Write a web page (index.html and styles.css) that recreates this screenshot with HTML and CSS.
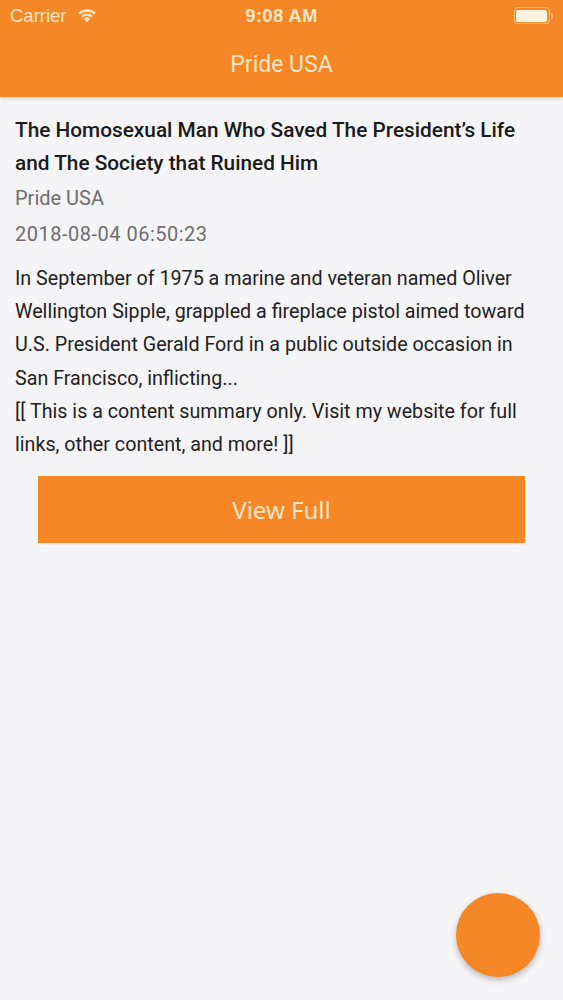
FILE: index.html
```html
<!DOCTYPE html>
<html>
<head>
<meta charset="utf-8">
<link rel="stylesheet" href="styles.css">
</head>
<body>
<div class="app">
  <header class="header">
    <div class="status">
      <div class="status-left">
        <span>Carrier</span>
        <svg class="wifi" width="22" height="16" viewBox="0 0 20 14">
          <path d="M10 13.5 L7 10.3 A4.4 4.4 0 0 1 13 10.3 Z" fill="#FFE6C4"/>
          <path d="M4.6 7.7 A7.8 7.8 0 0 1 15.4 7.7 L13.9 9.3 A5.6 5.6 0 0 0 6.1 9.3 Z" fill="#FFE6C4"/>
          <path d="M2 5 A11.5 11.5 0 0 1 18 5 L16.5 6.6 A9.3 9.3 0 0 0 3.5 6.6 Z" fill="#FFE6C4"/>
        </svg>
      </div>
      <div class="status-time">9:08 AM</div>
      <div class="status-right">
        <div class="battery"><div class="battery-fill"></div></div>
        <div class="battery-tip"></div>
      </div>
    </div>
    <div class="nav">Pride USA</div>
  </header>
  <main class="content">
    <h1 class="title">The Homosexual Man Who Saved The President’s Life and The Society that Ruined Him</h1>
    <div class="meta">Pride USA</div>
    <div class="meta date">2018-08-04 06:50:23</div>
    <p class="body">In September of 1975 a marine and veteran named Oliver Wellington Sipple, grappled a fireplace pistol aimed toward U.S. President Gerald Ford in a public outside occasion in San Francisco, inflicting...<br>[[ This is a content summary only. Visit my website for full links, other content, and more! ]]</p>
    <div class="btn-wrap"><button class="btn">View Full</button></div>
  </main>
  <div class="fab"></div>
</div>
</body>
</html>
```
FILE: styles.css
```css
* { box-sizing: border-box; }
html, body { margin: 0; padding: 0; }
body {
  width: 563px;
  height: 1000px;
  background: #f5f4f6;
  font-family: Roboto, "Noto Sans", sans-serif;
  overflow: hidden;
}
.app { position: relative; height: 1000px; }
.header {
  background: #f58726;
  height: 97px;
  box-shadow: 0 2px 4px rgba(0,0,0,0.12);
  color: #ffe6c4;
}
.status {
  height: 31px;
  display: flex;
  align-items: center;
  justify-content: space-between;
  padding: 0 10px 0 10px;
  font-family: "Liberation Sans", Arial, sans-serif;
}
.status-left {
  display: flex;
  align-items: center;
  gap: 9px;
  font-size: 18.5px;
  width: 130px;
}
.wifi { margin-top: -2px; }
.status-time {
  font-size: 18.5px;
  font-weight: bold;
  letter-spacing: 0.3px;
}
.status-right {
  width: 130px;
  display: flex;
  justify-content: flex-end;
  align-items: center;
}
.battery {
  width: 36px;
  height: 17px;
  border: 1.5px solid rgba(255,230,196,0.55);
  border-radius: 4px;
  padding: 1.5px;
}
.battery-fill {
  width: 100%;
  height: 100%;
  background: #fff3e0;
  border-radius: 2px;
}
.battery-tip {
  width: 2px;
  height: 6px;
  background: rgba(255,230,196,0.55);
  border-radius: 0 1px 1px 0;
  margin-left: 1px;
}
.nav {
  height: 66px;
  display: flex;
  align-items: center;
  justify-content: center;
  font-size: 23px;
  padding-top: 1px;
}
.content {
  padding: 17px 15px 0 15px;
}
.title {
  margin: 0;
  font-size: 20.8px;
  font-weight: 500;
  line-height: 33px;
  color: #1a1a1a;
}
.meta {
  font-size: 20px;
  line-height: 36px;
  color: #6e6e6e;
}
.date { letter-spacing: 0.5px; }
.body {
  margin: 10px 0 0 0;
  font-size: 19.7px;
  line-height: 33.2px;
  color: #222;
}
.btn-wrap {
  padding: 15px 23px 0 23px;
}
.btn {
  display: block;
  width: 100%;
  height: 67px;
  border: none;
  background: #f58726;
  color: #ffe6c4;
  font-family: "Noto Sans", Roboto, sans-serif;
  font-size: 24px;
  border-radius: 0;
  box-shadow: 0 1px 2px rgba(0,0,0,0.06);
}
.fab {
  position: absolute;
  left: 456px;
  top: 893px;
  width: 84px;
  height: 84px;
  border-radius: 50%;
  background: #f58726;
  box-shadow: 0 3px 6px rgba(0,0,0,0.25);
}
```
